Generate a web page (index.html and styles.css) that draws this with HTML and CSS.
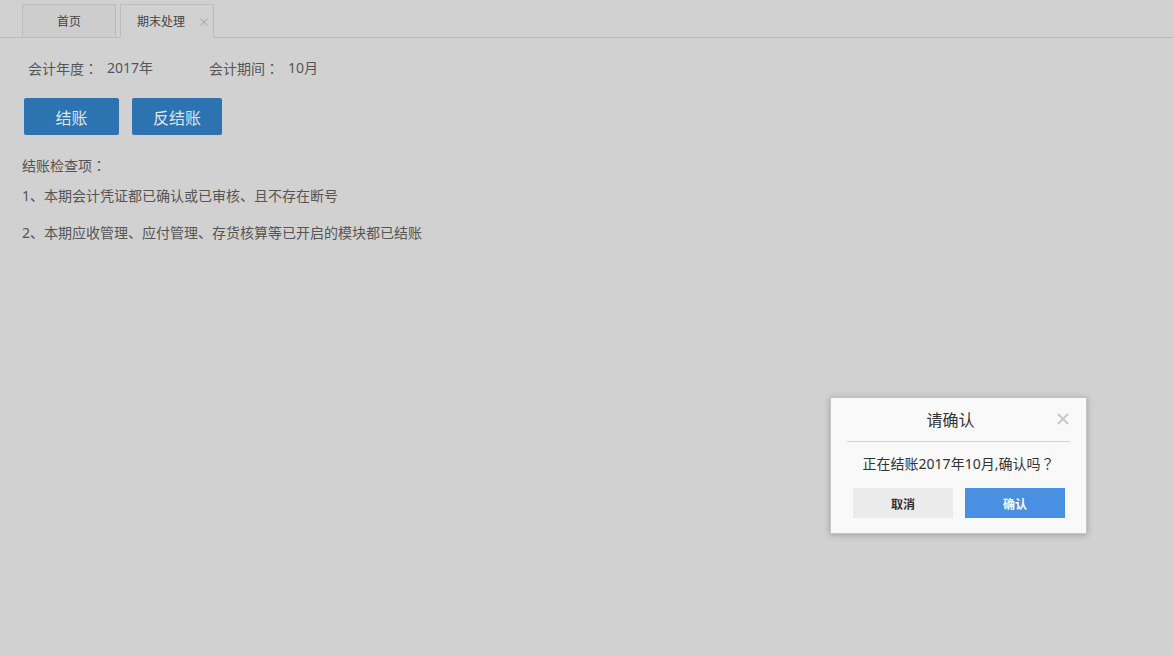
FILE: index.html
```html
<!DOCTYPE html>
<html lang="zh-CN">
<head>
<meta charset="utf-8">
<title>期末处理</title>
<link rel="stylesheet" href="styles.css">
</head>
<body>
<div class="tabbar">
  <div class="tab">首页</div>
  <div class="tab active">期末处理<span class="tab-close">×</span></div>
</div>
<div class="content">
  <div class="info">
    <span class="label">会计年度<span class="fw" lang="ja">：</span></span><span class="value year">2017年</span>
    <span class="label">会计期间<span class="fw" lang="ja">：</span></span><span class="value">10月</span>
  </div>
  <div class="actions">
    <button class="btn btn-close">结账</button>
    <button class="btn btn-reopen">反结账</button>
  </div>
  <div class="checks">
    <div class="check-title">结账检查项<span class="fw" lang="ja">：</span></div>
    <div class="check-item">1、本期会计凭证都已确认或已审核、且不存在断号</div>
    <div class="check-item">2、本期应收管理、应付管理、存货核算等已开启的模块都已结账</div>
  </div>
</div>
<div class="dialog">
  <div class="dialog-head">
    <span class="dialog-title">请确认</span>
    <svg class="dialog-x" width="12" height="12" viewBox="0 0 12 12"><path d="M1 1L11 11M11 1L1 11" stroke="#c8c8c8" stroke-width="2" fill="none"/></svg>
  </div>
  <div class="dialog-msg">正在结账2017年10月,确认吗<span class="fw" lang="ja">？</span></div>
  <div class="dialog-btns">
    <button class="dbtn cancel">取消</button>
    <button class="dbtn ok">确认</button>
  </div>
</div>
</body>
</html>
```
FILE: styles.css
```css
html, body {
  margin: 0;
  padding: 0;
}
body {
  background: #d1d1d1;
  font-family: "Noto Sans", "Noto Sans CJK SC", sans-serif;
  color: #555;
  width: 1173px;
  height: 655px;
  overflow: hidden;
  position: relative;
}
.fw {
  font-family: "Noto Sans CJK JP", sans-serif;
}
.tabbar {
  display: flex;
  gap: 4px;
  padding: 4px 0 0 22px;
  height: 33px;
  border-bottom: 1px solid #bdbdbd;
  align-items: flex-end;
}
.tab {
  box-sizing: border-box;
  width: 94px;
  height: 34px;
  margin-bottom: -1px;
  border: 1px solid #bcbcbc;
  background: #cdcdcd;
  font-size: 12px;
  color: #444;
  display: flex;
  align-items: center;
  justify-content: center;
  line-height: 1;
  padding-top: 2px;
}
.tab.active {
  background: #d1d1d1;
  border-bottom-color: #d1d1d1;
  justify-content: flex-start;
  padding-left: 16px;
  position: relative;
}
.tab-close {
  position: absolute;
  right: 4px;
  top: 8px;
  font-size: 17px;
  font-weight: 300;
  color: #a8a8a8;
  line-height: 1;
}
.content {
  padding: 0 0 0 22px;
}
.info {
  display: flex;
  align-items: center;
  height: 20px;
  margin-top: 20px;
  padding-left: 6px;
  font-size: 14px;
  line-height: 20px;
  color: #555;
}
.label {
  margin-right: 9px;
}
.value.year {
  width: 102px;
}
.actions {
  display: flex;
  gap: 13px;
  margin-top: 20px;
  padding-left: 2px;
}
.btn {
  height: 37px;
  border: none;
  border-radius: 2px;
  background: #2e73b1;
  color: #dfe6ee;
  font-family: "Noto Sans CJK SC", sans-serif;
  font-size: 16px;
  padding: 0;
  cursor: pointer;
}
.btn-close { width: 95px; }
.btn-reopen { width: 90px; }
.checks {
  margin-top: 20px;
  font-size: 14px;
  color: #555;
}
.check-title {
  line-height: 20px;
}
.check-item {
  line-height: 20px;
  margin-top: 10px;
}
.check-item + .check-item {
  margin-top: 17px;
}
.dialog {
  position: absolute;
  left: 830px;
  top: 397px;
  width: 257px;
  height: 137px;
  box-sizing: border-box;
  background: #f9f9f9;
  border: 1px solid #c4c4c4;
  box-shadow: 0 1px 6px rgba(0,0,0,0.25);
  padding: 0 16px;
  display: flex;
  flex-direction: column;
}
.dialog-head {
  position: relative;
  height: 43px;
  border-bottom: 1px solid #d6d6d6;
  display: flex;
  align-items: center;
  justify-content: center;
  padding-right: 16px;
}
.dialog-title {
  font-family: "Noto Sans CJK SC", sans-serif;
  font-size: 16px;
  color: #333;
  margin-top: -2px;
}
.dialog-x {
  position: absolute;
  right: 1px;
  top: 15px;
}
.dialog-msg {
  text-align: center;
  font-size: 14px;
  color: #333;
  line-height: 20px;
  margin-top: 11px;
}
.dialog-btns {
  display: flex;
  justify-content: space-between;
  margin-top: 14px;
  padding: 0 5px 0 6px;
}
.dbtn {
  width: 100px;
  height: 30px;
  border: none;
  font-family: "Noto Sans CJK SC", sans-serif;
  font-size: 12px;
  font-weight: bold;
  padding: 0;
}
.dbtn.cancel {
  background: #ebebeb;
  color: #333;
}
.dbtn.ok {
  background: #4a90e2;
  color: #fff;
}
```
